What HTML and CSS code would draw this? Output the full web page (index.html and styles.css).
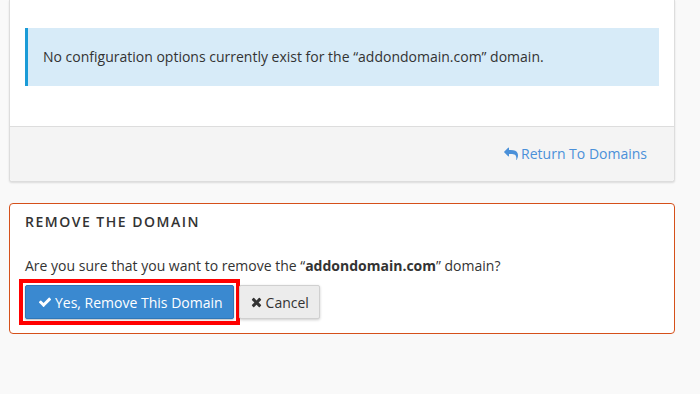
FILE: index.html
```html
<!DOCTYPE html>
<html lang="en">
<head>
    <meta charset="UTF-8">
    <title>Remove Addon Domain</title>
    <link rel="stylesheet" href="styles.css">
</head>
<body>
    <!-- Domain settings panel -->
    <div class="panel">
        <div class="panel-body">
            <div class="alert-info">
                No configuration options currently exist for the &ldquo;addondomain.com&rdquo; domain.
            </div>
        </div>
        <div class="panel-footer">
            <a class="return-link" href="#">
                <svg class="icon-reply" viewBox="0 0 1792 1792"><path d="M1792 1120q0 166-127 451-3 7-10.5 24t-13.5 30-13 22q-12 17-28 17-15 0-23.5-10t-8.5-25q0-9 2.5-26.5t2.5-23.5q5-68 5-123 0-101-17.5-181t-48.5-138.5-80-101-105.5-69.5-133-42.5-154-21.5-175.5-6h-224v256q0 26-19 45t-45 19-45-19l-512-512q-19-19-19-45t19-45l512-512q19-19 45-19t45 19 19 45v256h224q713 0 875 403 53 134 53 333z"/></svg>
                Return To Domains
            </a>
        </div>
    </div>

    <!-- Remove domain panel -->
    <div class="panel-danger">
        <h2 class="panel-title">Remove the Domain</h2>
        <p class="confirm-text">Are you sure that you want to remove the &ldquo;<b>addondomain.com</b>&rdquo; domain?</p>
        <div class="actions">
            <span class="highlighted">
                <button class="btn btn-primary">
                    <svg class="icon-check" viewBox="0 0 1792 1792"><path d="M1671 566q0 40-28 68l-724 724-136 136q-28 28-68 28t-68-28l-136-136-362-362q-28-28-28-68t28-68l136-136q28-28 68-28t68 28l294 295 656-657q28-28 68-28t68 28l136 136q28 28 28 68z"/></svg>
                    Yes, Remove This Domain
                </button>
            </span>
            <button class="btn btn-default">
                <svg class="icon-times" viewBox="0 0 1408 1792"><path d="M1298 1322q0 40-28 68l-136 136q-28 28-68 28t-68-28l-294-294-294 294q-28 28-68 28t-68-28l-136-136q-28-28-28-68t28-68l294-294-294-294q-28-28-28-68t28-68l136-136q28-28 68-28t68 28l294 294 294-294q28-28 68-28t68 28l136 136q28 28 28 68t-28 68l-294 294 294 294q28 28 28 68z"/></svg>
                Cancel
            </button>
        </div>
    </div>
</body>
</html>
```

FILE: styles.css
```css
body {
    margin: 0;
    padding: 0 25px 0 9px;
    background-color: #f9f9f9;
    font-family: 'Open Sans', sans-serif;
    font-size: 14px;
    line-height: 20px;
    color: #333;
}

/* Top panel (scrolled, top edge is off screen) */
.panel {
    background-color: #fff;
    border: 1px solid #ddd;
    border-top: none;
    border-radius: 0 0 3px 3px;
    box-shadow: 0 1px 2px rgba(0, 0, 0, 0.12);
}

.panel-body {
    padding: 28px 15px 40px;
}

.alert-info {
    background-color: #d7ebf8;
    border-left: 3px solid #1a9bd7;
    padding: 19px 15px;
}

.panel-footer {
    background-color: #f4f4f4;
    border-top: 1px solid #ddd;
    height: 54px;
    display: flex;
    align-items: center;
    justify-content: flex-end;
    padding: 0 27px;
    border-radius: 0 0 3px 3px;
}

.return-link {
    color: #4a90d9;
    text-decoration: none;
    display: flex;
    align-items: center;
    gap: 3px;
}

.icon-reply {
    width: 14px;
    height: 14px;
    fill: #4a90d9;
}

/* Remove panel */
.panel-danger {
    margin-top: 21px;
    background-color: #fff;
    border: 1px solid #d5501a;
    border-radius: 4px;
    padding: 8px 15px 14px;
}

.panel-title {
    margin: 0;
    font-size: 14px;
    font-weight: 600;
    letter-spacing: 1.5px;
    text-transform: uppercase;
    line-height: 20px;
}

.confirm-text {
    margin: 24px 0 9px;
}

.confirm-text b {
    font-weight: 700;
}

.actions {
    display: flex;
    gap: 5px;
}

.btn {
    font-family: 'Open Sans', sans-serif;
    font-size: 14px;
    height: 34px;
    border-radius: 2px;
    display: flex;
    align-items: center;
    gap: 3px;
    cursor: pointer;
}

.btn-primary {
    background-color: #3a89d0;
    border: 1px solid #2f77b8;
    color: #fff;
    padding: 0 10px 0 12px;
    box-shadow: 0 1px 2px rgba(0, 0, 0, 0.25);
}

.btn-primary svg {
    width: 14px;
    height: 14px;
    fill: #fff;
}

.btn-default {
    background-color: #ececec;
    border: 1px solid #d0d0d0;
    color: #333;
    padding: 0 10px;
    box-shadow: 0 1px 3px rgba(0, 0, 0, 0.2);
}

.btn-default svg {
    width: 13px;
    height: 14px;
    fill: #333;
}

/* Annotation box around the confirm button */
.highlighted {
    display: flex;
    outline: 4px solid #f00;
    outline-offset: 2px;
}
```
